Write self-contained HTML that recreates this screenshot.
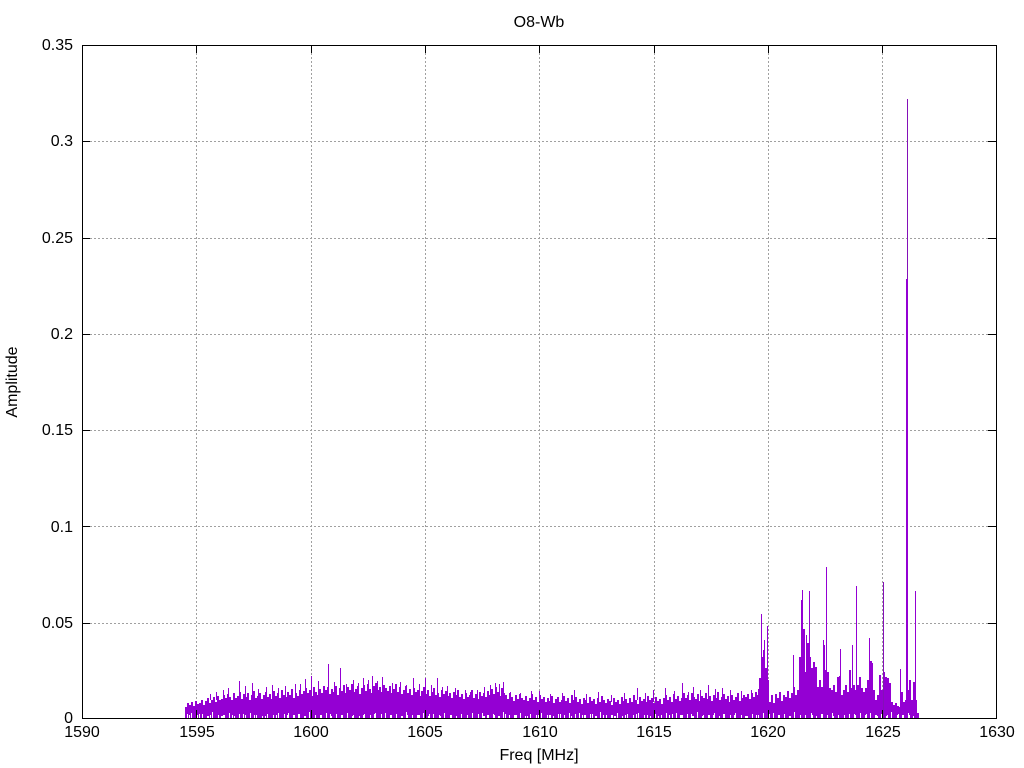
<!DOCTYPE html>
<html><head><meta charset="utf-8"><title>O8-Wb</title>
<style>
html,body{margin:0;padding:0;background:#fff;width:1024px;height:768px;overflow:hidden}
svg{display:block}
text{font-family:"Liberation Sans",sans-serif;font-size:16px;fill:#000}
</style></head><body>
<svg xmlns="http://www.w3.org/2000/svg" width="1024" height="768" viewBox="0 0 1024 768">
<defs>
<pattern id="n1" patternUnits="userSpaceOnUse" x="185" y="708" width="97" height="10">
<path fill="#fff" shape-rendering="crispEdges" d="M2 6h1v4h-1zM6 5h1v5h-1zM11 7h2v3h-2zM17 6h1v4h-1zM22 8h2v2h-2zM27 4h1v6h-1zM33 7h1v3h-1zM38 7h2v3h-2zM44 5h1v5h-1zM49 8h1v2h-1zM54 6h1v4h-1zM60 7h1v3h-1zM65 5h1v5h-1zM71 7h1v3h-1zM77 8h1v2h-1zM82 6h1v4h-1zM88 7h1v3h-1zM93 5h1v5h-1z"/>
</pattern>
<pattern id="n2" patternUnits="userSpaceOnUse" x="185" y="708" width="131" height="10">
<path fill="#fff" shape-rendering="crispEdges" d="M4 7h1v3h-1zM14 6h1v4h-1zM25 7h1v3h-1zM36 8h2v2h-2zM47 7h1v3h-1zM58 6h1v4h-1zM69 7h1v3h-1zM80 8h1v2h-1zM91 7h1v3h-1zM102 7h2v3h-2zM113 6h1v4h-1zM124 8h1v2h-1z"/>
</pattern>
</defs>
<rect width="1024" height="768" fill="#fff"/>
<g stroke="#a0a0a0" stroke-width="1" stroke-dasharray="2 2" fill="none" shape-rendering="crispEdges">
<path d="M196.5 45V718M311.5 45V718M425.5 45V718M539.5 45V718M654.5 45V718M768.5 45V718M882.5 45V718"/>
<path d="M82 141.5H996M82 238.5H996M82 334.5H996M82 430.5H996M82 526.5H996M82 623.5H996"/>
</g>
<path fill="#9400d3" shape-rendering="crispEdges" d="M185 718V707h2V703h2V705h2V702h2V706h2V701h2V704h2V703h2V700h2V705h2V701h2V698h2V703h2V700h2V697h2V702h2V696h2V700h2V699h2V695h2V698h2V694h2V697h2V700h2V693h2V698h2V696h2V692h2V699h2V694h2V697h2V693h2V700h2V695h2V691h2V698h2V696h2V693h2V699h2V695h2V692h2V697h2V694h2V699h2V691h2V696h2V693h2V698h2V690h2V695h2V697h2V692h2V695h2V689h2V698h2V693h2V696h2V690h2V694h2V691h2V688h2V693h2V690h2V696h2V687h2V692h2V695h2V689h2V693h2V686h2V690h2V687h2V694h2V689h2V692h2V686h2V695h2V688h2V691h2V685h2V693h2V687h2V690h2V684h2V692h2V689h2V686h2V694h2V688h2V685h2V691h2V684h2V689h2V693h2V686h2V683h2V690h2V687h2V692h2V685h2V688h2V691h2V686h2V693h2V689h2V684h2V692h2V687h2V694h2V690h2V686h2V693h2V689h2V695h2V688h2V692h2V690h2V696h2V691h2V687h2V694h2V690h2V696h2V692h2V688h2V695h2V693h2V697h2V690h2V694h2V691h2V696h2V693h2V698h2V692h2V695h2V690h2V697h2V694h2V699h2V693h2V697h2V695h2V690h2V698h2V694h2V699h2V692h2V696h2V693h2V697h2V691h2V695h2V689h2V694h2V687h2V692h2V696h2V688h2V693h2V695h2V699h2V693h2V697h2V701h2V695h2V699h2V694h2V698h2V700h2V696h2V701h2V698h2V694h2V700h2V697h2V702h2V695h2V699h2V697h2V702h2V698h2V701h2V696h2V703h2V699h2V697h2V702h2V700h2V696h2V701h2V698h2V703h2V695h2V700h2V697h2V702h2V699h2V704h2V698h2V700h2V703h2V697h2V701h2V699h2V704h2V698h2V702h2V696h2V700h2V703h2V699h2V701h2V705h2V698h2V702h2V700h2V704h2V697h2V701h2V699h2V703h2V698h2V702h2V695h2V700h2V704h2V697h2V701h2V699h2V702h2V696h2V700h2V698h2V703h2V697h2V701h2V699h2V704h2V698h2V695h2V700h2V697h2V702h2V694h2V699h2V696h2V701h2V698h2V693h2V698h2V695h2V700h2V693h2V697h2V699h2V694h2V701h2V696h2V698h2V693h2V699h2V696h2V701h2V695h2V698h2V692h2V700h2V697h2V694h2V699h2V696h2V702h2V695h2V700h2V697h2V693h2V701h2V698h2V695h2V697h2V694h2V699h2V693h2V697h2V692h2V695h2V678h2V657h2V650h2V668h2V680h2V702h2V695h2V703h2V694h2V698h2V692h2V701h2V695h2V697h2V691h2V698h2V693h2V687h2V695h2V690h2V657h2V600h2V629h2V672h2V643h2V657h2V668h2V662h2V667h2V687h2V680h2V687h2V645h2V670h2V672h2V688h2V690h2V685h2V692h2V677h2V676h2V695h2V690h2V685h2V692h2V670h2V688h2V685h2V690h2V685h2V677h2V688h2V692h2V688h2V680h2V661h2V663h2V690h2V700h2V695h2V675h2V690h2V672h2V677h2V678h2V683h2V702h2V705h2V703h2V706h2V707h2V692h2V702h2V700h2V690h2V680h2V700h2V682h2V700h2V713h2V718z"/>
<rect x="185" y="708" width="733" height="10" fill="url(#n1)"/>
<rect x="185" y="708" width="733" height="10" fill="url(#n2)"/>
<path fill="none" stroke="#9400d3" stroke-width="1" shape-rendering="crispEdges" d="M761.5 718V614M764.5 718V640M767.5 718V626M802.5 718V590M806.5 718V635M809.5 718V591M793.5 718V655M823.5 718V640M826.5 718V567M840.5 718V649M852.5 718V645M856.5 718V586M869.5 718V638M871.5 718V661M900.5 718V669M915.5 718V591M906.5 718V279M907.5 718V279M328.5 700V664M340.5 700V668M239.5 700V681M252.5 700V683M311.5 700V676M305.5 700V679M266.5 700V687M278.5 700V688M295.5 700V684M300.5 700V684M353.5 700V680M363.5 700V678M372.5 700V676M382.5 700V677M400.5 700V682M413.5 700V678M425.5 700V678M437.5 700V678M447.5 700V686M470.5 700V692M465.5 700V690M228.5 700V688M223.5 700V690M503.5 700V682M495.5 700V683M484.5 700V687M682.5 700V683M693.5 700V687M708.5 700V685M722.5 700V688M758.5 700V689M637.5 700V688M653.5 702V690M539.5 702V691M574.5 702V690M210.5 700V694M216.5 700V692M245.5 700V686M258.5 700V689M272.5 700V685M285.5 700V686M318.5 700V681M334.5 700V682M346.5 700V684M358.5 700V683M368.5 700V680M377.5 700V681M392.5 700V683M406.5 700V685M419.5 700V684M431.5 700V685M442.5 700V687M455.5 700V688M477.5 700V690M490.5 700V685M499.5 700V684M510.5 700V692M520.5 700V693M531.5 700V691M550.5 702V694M562.5 702V693M586.5 702V694M598.5 702V692M611.5 702V695M624.5 702V693M645.5 702V693M665.5 702V688M674.5 702V691M688.5 702V692M700.5 702V690M715.5 702V689M730.5 702V690M741.5 702V691M751.5 702V690"/>
<path fill="none" stroke="#8410b8" stroke-width="1" shape-rendering="crispEdges" d="M907.5 279V99M883.5 718V582"/>
<g stroke="#000" stroke-width="1" fill="none" shape-rendering="crispEdges">
<path d="M82.5 45.5H996.5V718.5H82.5Z"/>
<path d="M196.5 718V710M311.5 718V710M425.5 718V710M539.5 718V710M654.5 718V710M768.5 718V710M882.5 718V710M196.5 45V53M311.5 45V53M425.5 45V53M539.5 45V53M654.5 45V53M768.5 45V53M882.5 45V53"/>
<path d="M82 141.5H90M82 238.5H90M82 334.5H90M82 430.5H90M82 526.5H90M82 623.5H90M996 141.5H988M996 238.5H988M996 334.5H988M996 430.5H988M996 526.5H988M996 623.5H988"/>
</g>
<g text-anchor="end">
<text x="73" y="723">0</text>
<text x="73" y="628">0.05</text>
<text x="73" y="532">0.1</text>
<text x="73" y="435">0.15</text>
<text x="73" y="339">0.2</text>
<text x="73" y="243">0.25</text>
<text x="73" y="146">0.3</text>
<text x="73" y="50">0.35</text>
</g>
<g text-anchor="middle">
<text x="82" y="737">1590</text>
<text x="197" y="737">1595</text>
<text x="311" y="737">1600</text>
<text x="425" y="737">1605</text>
<text x="540" y="737">1610</text>
<text x="654" y="737">1615</text>
<text x="768" y="737">1620</text>
<text x="883" y="737">1625</text>
<text x="997" y="737">1630</text>
<text x="539" y="760">Freq [MHz]</text>
<text x="539" y="27">O8-Wb</text>
<text transform="translate(17 382) rotate(-90)">Amplitude</text>
</g>
</svg>
</body></html>
